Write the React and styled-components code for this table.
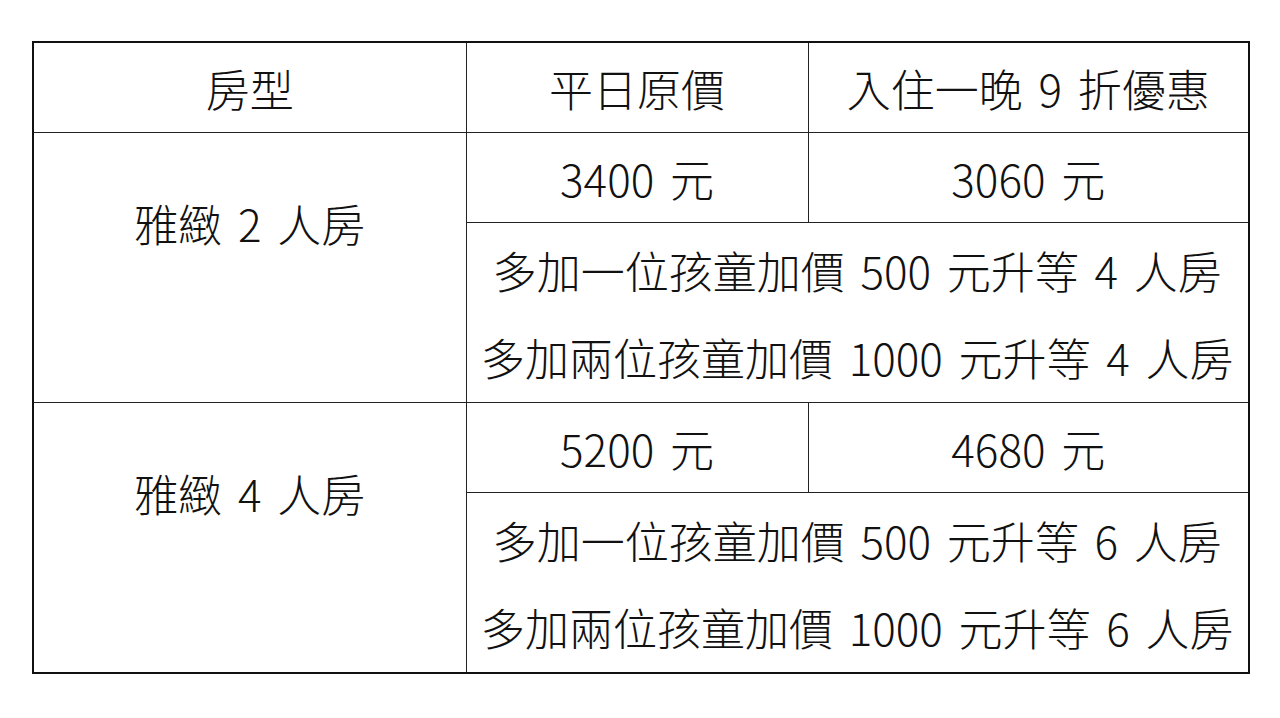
import React from "react"
import styled, { createGlobalStyle } from "styled-components"

const GlobalStyle = createGlobalStyle`
  html, body {
    margin: 0;
    padding: 0;
    background: #fff;
  }
  body {
    font-family: "Noto Sans CJK TC", "Noto Sans", sans-serif;
    color: #111;
  }
`

const Page = styled.div`
  padding: 41px 32px 0 32px;
`

const Table = styled.table`
  width: 1216px;
  border-collapse: collapse;
  border: 2px solid #111;
  table-layout: fixed;
`

const Cell = styled.td`
  border: 1px solid #222;
  height: ${p => (p.$tall ? 179 : 89)}px;
  padding: 0 0 ${p => (p.$raised ? 90 : 0)}px 0;
  text-align: center;
  vertical-align: middle;
  font-size: 44px;
  font-weight: 300;
  line-height: 1;
  word-spacing: 6px;
  white-space: nowrap;
`

const Line = styled.div`
  line-height: 87px;
  padding-top: ${p => (p.$first ? 2 : 0)}px;
`

const rooms = [
  {
    name: "雅緻 2 人房",
    price: "3400 元",
    sale: "3060 元",
    extras: [
      "多加一位孩童加價 500 元升等 4 人房",
      "多加兩位孩童加價 1000 元升等 4 人房",
    ],
  },
  {
    name: "雅緻 4 人房",
    price: "5200 元",
    sale: "4680 元",
    extras: [
      "多加一位孩童加價 500 元升等 6 人房",
      "多加兩位孩童加價 1000 元升等 6 人房",
    ],
  },
]

export default function App() {
  return (
    <>
      <GlobalStyle />
      <Page>
        <Table>
          <colgroup>
            <col style={{ width: 433 }} />
            <col style={{ width: 342 }} />
            <col style={{ width: 441 }} />
          </colgroup>
          <tbody>
            <tr>
              <Cell>房型</Cell>
              <Cell>平日原價</Cell>
              <Cell>入住一晚 9 折優惠</Cell>
            </tr>
            {rooms.map(room => (
              <React.Fragment key={room.name}>
                <tr>
                  <Cell rowSpan={2} $raised>
                    {room.name}
                  </Cell>
                  <Cell>{room.price}</Cell>
                  <Cell>{room.sale}</Cell>
                </tr>
                <tr>
                  <Cell colSpan={2} $tall>
                    {room.extras.map((text, i) => (
                      <Line key={text} $first={i === 0}>
                        {text}
                      </Line>
                    ))}
                  </Cell>
                </tr>
              </React.Fragment>
            ))}
          </tbody>
        </Table>
      </Page>
    </>
  )
}
